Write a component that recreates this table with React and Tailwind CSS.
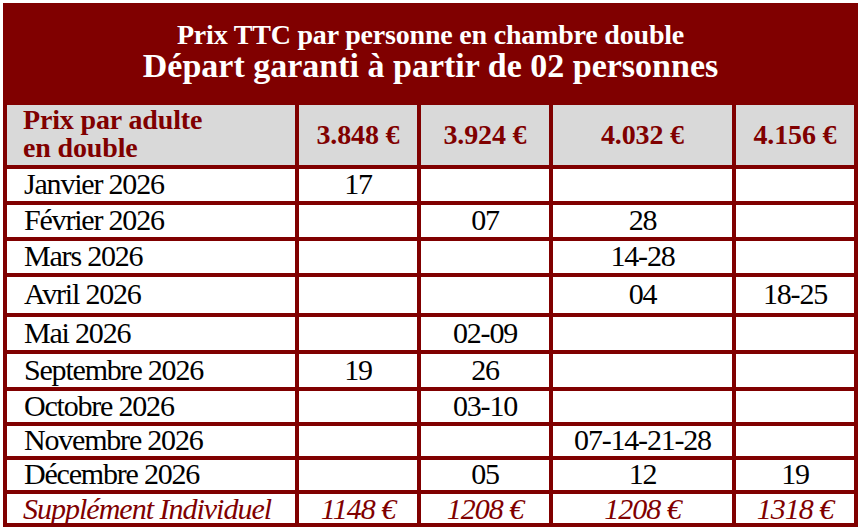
import React from 'react';

const prices = ['3.848 €', '3.924 €', '4.032 €', '4.156 €'];

const rows = [
  ['Janvier 2026', '17', '', '', ''],
  ['Février 2026', '', '07', '28', ''],
  ['Mars 2026', '', '', '14-28', ''],
  ['Avril 2026', '', '', '04', '18-25'],
  ['Mai 2026', '', '02-09', '', ''],
  ['Septembre 2026', '19', '26', '', ''],
  ['Octobre 2026', '', '03-10', '', ''],
  ['Novembre 2026', '', '', '07-14-21-28', ''],
  ['Décembre 2026', '', '05', '12', '19'],
];

const supplements = ['1148 €', '1208 €', '1208 €', '1318 €'];

export default function App() {
  return (
    <div className="min-h-[528px] bg-white pl-[3px] pt-[3px] font-['Liberation_Serif',serif]">
      <div className="w-[855px] bg-[#800000]">
        {/* title block */}
        <div className="h-[102px] pt-[18px] text-center font-bold text-white">
          <div className="text-[28px] leading-[28px] tracking-[-0.2px]">
            Prix TTC par personne en chambre double
          </div>
          <div className="text-[34px] leading-[34px]">
            Départ garanti à partir de 02 personnes
          </div>
        </div>

        <div className="grid grid-cols-[288px_118px_128px_179px_118px] grid-rows-[60px_32px_32px_32px_36px_33px_33px_31px_30px_30px_29px] gap-[4px] px-[4px] pb-[4px]">
          {/* price header */}
          <div className="bg-[#d9d9d9] pl-[16px] pt-[1px] text-[28px] font-bold leading-[28px] tracking-[-0.15px] text-[#800000]">
            Prix par adulte
            <br />
            en double
          </div>
          {prices.map((p) => (
            <div
              key={p}
              className="flex items-center justify-center bg-[#d9d9d9] text-[28px] font-bold tracking-[-0.15px] text-[#800000]"
            >
              {p}
            </div>
          ))}

          {rows.map((r) =>
            r.map((cell, i) => (
              <div
                key={r[0] + i}
                className={
                  'flex items-center bg-white pb-[2px] text-[30px] leading-none tracking-[-1.2px] text-black ' +
                  (i === 0 ? 'pl-[17px]' : 'justify-center')
                }
              >
                {cell}
              </div>
            ))
          )}

          <div className="flex items-center bg-white pl-[16px] text-[30px] italic leading-none tracking-[-1px] text-[#800000]">
            Supplément Individuel
          </div>
          {supplements.map((s, i) => (
            <div
              key={i}
              className="flex items-center justify-center bg-white text-[30px] italic leading-none tracking-[-1px] text-[#800000]"
            >
              {s}
            </div>
          ))}
        </div>
      </div>
    </div>
  );
}
